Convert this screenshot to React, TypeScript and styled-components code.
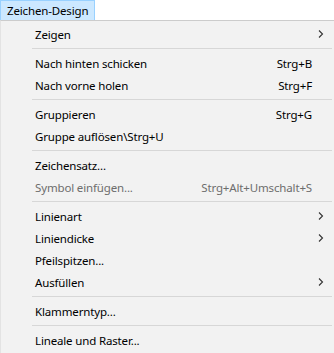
import styled, { createGlobalStyle } from 'styled-components';

const GlobalStyle = createGlobalStyle`
  html, body {
    margin: 0;
    padding: 0;
    background: #ffffff;
  }
  body {
    font-family: 'Noto Sans', 'Open Sans', sans-serif;
    font-size: 11.5px;
    letter-spacing: -0.15px;
    color: #000;
  }
`;

const Page = styled.div`
  width: 334px;
  height: 353px;
  overflow: hidden;
  display: flex;
  flex-direction: column;
`;

const MenuBar = styled.div`
  height: 20px;
  display: flex;
  background: #ffffff;
`;

const BarItem = styled.div<{ open?: boolean }>`
  height: 19px;
  padding: 0 6px 0 6px;
  display: flex;
  align-items: center;
  background: ${({ open }) => (open ? '#cce8ff' : 'transparent')};
  border: 1px solid ${({ open }) => (open ? '#99d1ff' : 'transparent')};
  border-bottom: none;
  line-height: 1;
`;

const Dropdown = styled.div`
  flex: 1;
  background: #f2f2f2;
  border-top: 1px solid #cccccc;
  border-left: 1px solid #e3e3e3;
  padding: 2px 0 0 0;
  display: flex;
  flex-direction: column;
`;

const Row = styled.div<{ disabled?: boolean }>`
  height: 22px;
  display: grid;
  grid-template-columns: 34px 1fr auto 22px;
  align-items: center;
  color: ${({ disabled }) => (disabled ? '#6d6d6d' : '#000')};
  white-space: nowrap;
`;

const Label = styled.span`
  grid-column: 2;
`;

const Shortcut = styled.span`
  grid-column: 3;
  text-align: right;
`;

const Arrow = styled.span`
  grid-column: 4;
  display: flex;
  justify-content: flex-start;
  padding-left: 6px;
`;

const Separator = styled.div`
  height: 7px;
  display: flex;
  align-items: center;
  padding-left: 31px;
  padding-right: 2px;

  &::after {
    content: '';
    flex: 1;
    height: 1px;
    background: #d7d7d7;
  }
`;

const Chevron = () => (
  <svg width="6" height="8" viewBox="0 0 6 8">
    <path d="M1 0.5 L4.5 4 L1 7.5" fill="none" stroke="#333" strokeWidth="1.1" />
  </svg>
);

type Entry =
  | { kind: 'sep' }
  | { kind: 'item'; label: string; shortcut?: string; sub?: boolean; disabled?: boolean };

const entries: Entry[] = [
  { kind: 'item', label: 'Zeigen', sub: true },
  { kind: 'sep' },
  { kind: 'item', label: 'Nach hinten schicken', shortcut: 'Strg+B' },
  { kind: 'item', label: 'Nach vorne holen', shortcut: 'Strg+F' },
  { kind: 'sep' },
  { kind: 'item', label: 'Gruppieren', shortcut: 'Strg+G' },
  { kind: 'item', label: 'Gruppe auflösen\\Strg+U' },
  { kind: 'sep' },
  { kind: 'item', label: 'Zeichensatz...' },
  { kind: 'item', label: 'Symbol einfügen...', shortcut: 'Strg+Alt+Umschalt+S', disabled: true },
  { kind: 'sep' },
  { kind: 'item', label: 'Linienart', sub: true },
  { kind: 'item', label: 'Liniendicke', sub: true },
  { kind: 'item', label: 'Pfeilspitzen...' },
  { kind: 'item', label: 'Ausfüllen', sub: true },
  { kind: 'sep' },
  { kind: 'item', label: 'Klammerntyp...' },
  { kind: 'sep' },
  { kind: 'item', label: 'Lineale und Raster...' },
];

const App = () => {
  return (
    <Page>
      <GlobalStyle />
      <MenuBar>
        <BarItem open>Zeichen-Design</BarItem>
      </MenuBar>
      <Dropdown>
        {entries.map((e, i) =>
          e.kind === 'sep' ? (
            <Separator key={i} />
          ) : (
            <Row key={i} disabled={e.disabled}>
              <Label>{e.label}</Label>
              {e.shortcut && <Shortcut>{e.shortcut}</Shortcut>}
              {e.sub && (
                <Arrow>
                  <Chevron />
                </Arrow>
              )}
            </Row>
          )
        )}
      </Dropdown>
    </Page>
  );
};

export default App;
